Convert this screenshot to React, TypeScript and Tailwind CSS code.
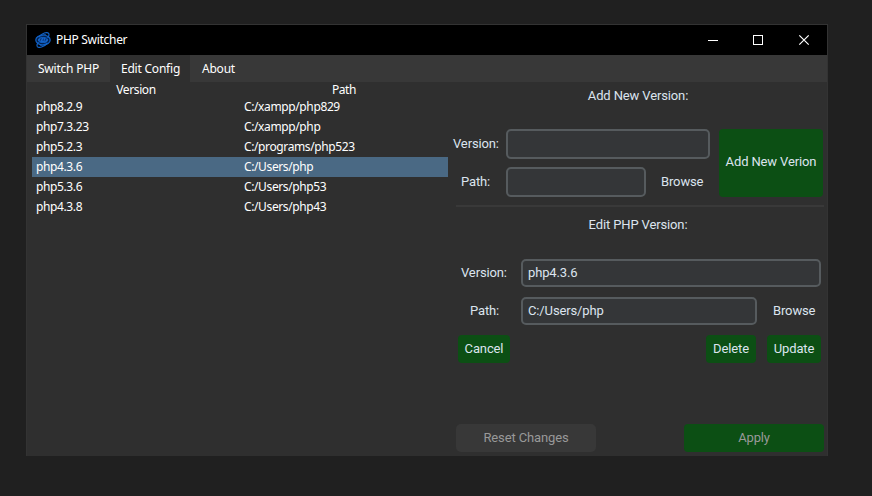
import React from "react";

const versions = [
  { name: "php8.2.9", path: "C:/xampp/php829" },
  { name: "php7.3.23", path: "C:/xampp/php" },
  { name: "php5.2.3", path: "C:/programs/php523" },
  { name: "php4.3.6", path: "C:/Users/php" },
  { name: "php5.3.6", path: "C:/Users/php53" },
  { name: "php4.3.8", path: "C:/Users/php43" },
];
const selected = "php4.3.6";

function Logo() {
  return (
    <svg width="16" height="16" viewBox="0 0 16 16" fill="none" stroke="#1263c9">
      <ellipse cx="8" cy="8" rx="7.2" ry="5" fill="#03204a" strokeWidth="1.2" />
      <path d="M3.5 5.2C7 .8 12.2-.3 13.6 1.4c1 1.3.2 2.9-1 4.6M12.5 10.8C9 15.2 3.8 16.3 2.4 14.6c-1-1.3-.2-2.9 1-4.6" strokeWidth="1.2" />
      <path d="M5.5 4.4c2-1.6 4.4-2.2 5.6-1.6M10.5 11.6c-2 1.6-4.4 2.2-5.6 1.6" strokeWidth="0.8" />
      <ellipse cx="8" cy="8" rx="4.6" ry="2.6" fill="#1463c8" strokeWidth="0.8" />
      <path d="M5 9.3l.6-2.5h1.2M8 9l.5-2.4M10 9.3l.5-2.4h1.1" stroke="#052a66" strokeWidth="0.8" />
    </svg>
  );
}

function TitleBar() {
  return (
    <div className="flex h-[30px] items-center bg-black pl-2">
      <Logo />
      <span className="ml-[5px] grow font-['Noto_Sans',sans-serif] text-[12px] leading-4 tracking-[-0.3px] text-white">PHP Switcher</span>
      <svg width="120" height="12" viewBox="0 0 120 12" fill="none" stroke="#fff">
        <path d="M1 6.5h10" />
        <path d="M46.5 1.5h9v9h-9z" shapeRendering="crispEdges" />
        <path d="M92.3 1.3l9.4 9.4M101.7 1.3l-9.4 9.4" strokeWidth="1.2" />
      </svg>
    </div>
  );
}

function Tabs() {
  return (
    <div className="flex h-[27px] bg-[#383838] font-['Noto_Sans',sans-serif] text-[12px] leading-[27px] tracking-[-0.22px] whitespace-nowrap text-white">
      <div className="w-[83px] pl-[11px]">Switch PHP</div>
      <div className="w-[80px] bg-[#2f2f2f] pl-[11px]">Edit Config</div>
      <div className="pl-[12px]">About</div>
    </div>
  );
}

function VersionTable() {
  return (
    <div className="ml-[5px] w-[416px] shrink-0 font-['Noto_Sans',sans-serif] text-[12px] tracking-[-0.38px] whitespace-nowrap text-white">
      <div className="grid h-[15px] grid-cols-2 text-center leading-[15px]">
        <span>Version</span>
        <span>Path</span>
      </div>
      {versions.map((v) => (
        <div key={v.name} className={`grid h-5 grid-cols-2 leading-5 ${v.name === selected ? "bg-[#4a6984]" : ""}`}>
          <span className="pl-1">{v.name}</span>
          <span className="pl-1">{v.path}</span>
        </div>
      ))}
    </div>
  );
}

function Field({ className, value = "" }: { className: string; value?: string }) {
  return (
    <div className={`flex shrink-0 items-center rounded-[5px] border-2 border-[#565b5e] bg-[#343638] pl-[5px] ${className}`}>{value}</div>
  );
}

function Button({ className, children }: { className: string; children: string }) {
  return <button className={`flex shrink-0 items-center justify-center rounded-[4px] bg-[#0c4f14] ${className}`}>{children}</button>;
}

function AddSection() {
  return (
    <section className="pt-[6px]">
      <h2 className="ml-[8px] w-[364px] text-center leading-4">Add New Version:</h2>
      <div className="mt-[25px] flex">
        <div className="flex w-[262px] flex-col gap-2">
          <div className="flex h-[30px] items-center">
            <span className="w-[58px] pl-[5px]">Version:</span>
            <Field className="h-[30px] w-[204px]" />
          </div>
          <div className="flex h-[30px] items-center">
            <span className="w-[58px] pl-[13px]">Path:</span>
            <Field className="h-[30px] w-[140px]" />
            <span className="ml-[15px]">Browse</span>
          </div>
        </div>
        <Button className="ml-[9px] h-[68px] w-[104px] pb-[3px]">Add New Verion</Button>
      </div>
    </section>
  );
}

function EditSection() {
  return (
    <section className="pt-[10px]">
      <h2 className="ml-[8px] w-[364px] text-center leading-4">Edit PHP Version:</h2>
      <div className="mt-[26px] flex h-7 items-center">
        <span className="w-[73px] pl-[13px]">Version:</span>
        <Field className="h-7 w-[300px]" value="php4.3.6" />
      </div>
      <div className="mt-[10px] flex h-7 items-center">
        <span className="w-[73px] pl-[22px]">Path:</span>
        <Field className="h-7 w-[236px]" value="C:/Users/php" />
        <span className="ml-4">Browse</span>
      </div>
      <div className="mt-[10px] ml-[10px] flex h-7">
        <Button className="w-[52px]">Cancel</Button>
        <Button className="ml-auto w-[50px]">Delete</Button>
        <Button className="mr-[6px] ml-[11px] w-[54px]">Update</Button>
      </div>
    </section>
  );
}

export default function App() {
  return (
    <div className="h-[496px] w-[872px] overflow-hidden bg-[#202020] pt-6 pl-[26px]">
      <div className="flex h-[432px] w-[802px] flex-col border-x border-t border-[#333333] bg-[#2f2f2f]">
        <TitleBar />
        <Tabs />
        <div className="flex min-h-0 grow">
          <VersionTable />
          <div className="flex w-[380px] flex-col font-[Roboto,sans-serif] text-[13px] leading-4 tracking-[-0.13px] whitespace-nowrap text-[#dce4ee]">
            <AddSection />
            <div className="mt-2 ml-2 h-[2px] w-[368px] shrink-0 bg-[#393939]" />
            <EditSection />
            <div className="mt-[61px] ml-2 flex h-7 w-[368px] justify-between text-[#999999]">
              <button className="w-[140px] rounded-[5px] bg-[#383838]">Reset Changes</button>
              <Button className="w-[140px]">Apply</Button>
            </div>
          </div>
        </div>
      </div>
    </div>
  );
}
